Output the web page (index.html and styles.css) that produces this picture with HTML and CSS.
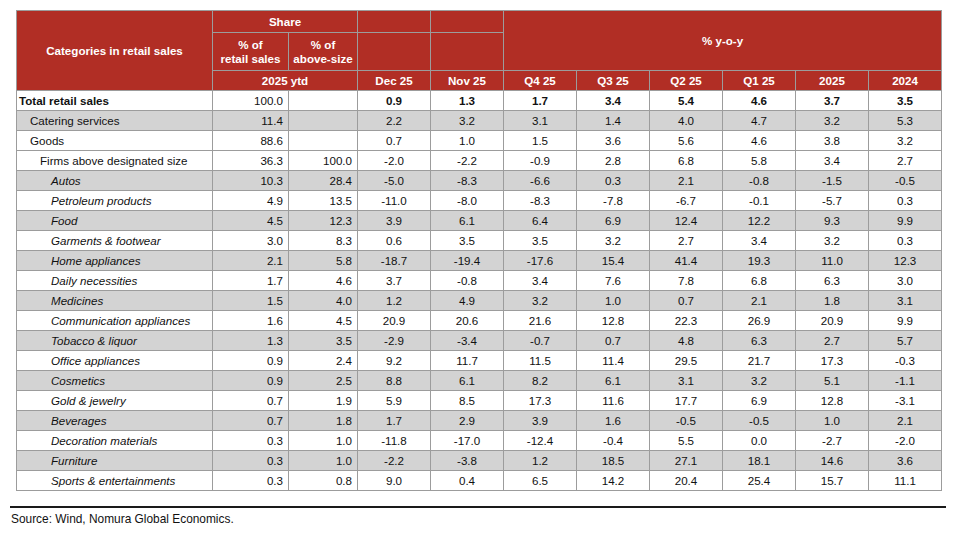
FILE: index.html
```html
<!DOCTYPE html>
<html>
<head>
<meta charset="utf-8">
<link rel="stylesheet" href="styles.css">
</head>
<body>
<div class="page">
<table class="tbl">
<colgroup>
<col class="c-cat"><col class="c-s1"><col class="c-s2">
<col class="c-n"><col class="c-n"><col class="c-n"><col class="c-n"><col class="c-n"><col class="c-n"><col class="c-n"><col class="c-n">
</colgroup>
<thead>
<tr class="h1">
<th rowspan="3">Categories in retail sales</th>
<th colspan="2">Share</th>
<th></th><th></th>
<th colspan="6" rowspan="2">% y-o-y</th>
</tr>
<tr class="h2">
<th>% of<br>retail sales</th>
<th>% of<br>above-size</th>
<th></th><th></th>
</tr>
<tr class="h3">
<th colspan="2">2025 ytd</th>
<th>Dec 25</th><th>Nov 25</th><th>Q4 25</th><th>Q3 25</th><th>Q2 25</th><th>Q1 25</th><th>2025</th><th>2024</th>
</tr>
</thead>
<tbody>
<tr class="w total"><td class="l0">Total retail sales</td><td class="r plain">100.0</td><td class="r"></td><td>0.9</td><td>1.3</td><td>1.7</td><td>3.4</td><td>5.4</td><td>4.6</td><td>3.7</td><td>3.5</td></tr>
<tr class="g"><td class="l1">Catering services</td><td class="r">11.4</td><td class="r"></td><td>2.2</td><td>3.2</td><td>3.1</td><td>1.4</td><td>4.0</td><td>4.7</td><td>3.2</td><td>5.3</td></tr>
<tr class="w"><td class="l1">Goods</td><td class="r">88.6</td><td class="r"></td><td>0.7</td><td>1.0</td><td>1.5</td><td>3.6</td><td>5.6</td><td>4.6</td><td>3.8</td><td>3.2</td></tr>
<tr class="w"><td class="l2">Firms above designated size</td><td class="r">36.3</td><td class="r">100.0</td><td>-2.0</td><td>-2.2</td><td>-0.9</td><td>2.8</td><td>6.8</td><td>5.8</td><td>3.4</td><td>2.7</td></tr>
<tr class="g"><td class="l3">Autos</td><td class="r">10.3</td><td class="r">28.4</td><td>-5.0</td><td>-8.3</td><td>-6.6</td><td>0.3</td><td>2.1</td><td>-0.8</td><td>-1.5</td><td>-0.5</td></tr>
<tr class="w"><td class="l3">Petroleum products</td><td class="r">4.9</td><td class="r">13.5</td><td>-11.0</td><td>-8.0</td><td>-8.3</td><td>-7.8</td><td>-6.7</td><td>-0.1</td><td>-5.7</td><td>0.3</td></tr>
<tr class="g"><td class="l3">Food</td><td class="r">4.5</td><td class="r">12.3</td><td>3.9</td><td>6.1</td><td>6.4</td><td>6.9</td><td>12.4</td><td>12.2</td><td>9.3</td><td>9.9</td></tr>
<tr class="w"><td class="l3">Garments &amp; footwear</td><td class="r">3.0</td><td class="r">8.3</td><td>0.6</td><td>3.5</td><td>3.5</td><td>3.2</td><td>2.7</td><td>3.4</td><td>3.2</td><td>0.3</td></tr>
<tr class="g"><td class="l3">Home appliances</td><td class="r">2.1</td><td class="r">5.8</td><td>-18.7</td><td>-19.4</td><td>-17.6</td><td>15.4</td><td>41.4</td><td>19.3</td><td>11.0</td><td>12.3</td></tr>
<tr class="w"><td class="l3">Daily necessities</td><td class="r">1.7</td><td class="r">4.6</td><td>3.7</td><td>-0.8</td><td>3.4</td><td>7.6</td><td>7.8</td><td>6.8</td><td>6.3</td><td>3.0</td></tr>
<tr class="g"><td class="l3">Medicines</td><td class="r">1.5</td><td class="r">4.0</td><td>1.2</td><td>4.9</td><td>3.2</td><td>1.0</td><td>0.7</td><td>2.1</td><td>1.8</td><td>3.1</td></tr>
<tr class="w"><td class="l3">Communication appliances</td><td class="r">1.6</td><td class="r">4.5</td><td>20.9</td><td>20.6</td><td>21.6</td><td>12.8</td><td>22.3</td><td>26.9</td><td>20.9</td><td>9.9</td></tr>
<tr class="g"><td class="l3">Tobacco &amp; liquor</td><td class="r">1.3</td><td class="r">3.5</td><td>-2.9</td><td>-3.4</td><td>-0.7</td><td>0.7</td><td>4.8</td><td>6.3</td><td>2.7</td><td>5.7</td></tr>
<tr class="w"><td class="l3">Office appliances</td><td class="r">0.9</td><td class="r">2.4</td><td>9.2</td><td>11.7</td><td>11.5</td><td>11.4</td><td>29.5</td><td>21.7</td><td>17.3</td><td>-0.3</td></tr>
<tr class="g"><td class="l3">Cosmetics</td><td class="r">0.9</td><td class="r">2.5</td><td>8.8</td><td>6.1</td><td>8.2</td><td>6.1</td><td>3.1</td><td>3.2</td><td>5.1</td><td>-1.1</td></tr>
<tr class="w"><td class="l3">Gold &amp; jewelry</td><td class="r">0.7</td><td class="r">1.9</td><td>5.9</td><td>8.5</td><td>17.3</td><td>11.6</td><td>17.7</td><td>6.9</td><td>12.8</td><td>-3.1</td></tr>
<tr class="g"><td class="l3">Beverages</td><td class="r">0.7</td><td class="r">1.8</td><td>1.7</td><td>2.9</td><td>3.9</td><td>1.6</td><td>-0.5</td><td>-0.5</td><td>1.0</td><td>2.1</td></tr>
<tr class="w"><td class="l3">Decoration materials</td><td class="r">0.3</td><td class="r">1.0</td><td>-11.8</td><td>-17.0</td><td>-12.4</td><td>-0.4</td><td>5.5</td><td>0.0</td><td>-2.7</td><td>-2.0</td></tr>
<tr class="g"><td class="l3">Furniture</td><td class="r">0.3</td><td class="r">1.0</td><td>-2.2</td><td>-3.8</td><td>1.2</td><td>18.5</td><td>27.1</td><td>18.1</td><td>14.6</td><td>3.6</td></tr>
<tr class="w"><td class="l3">Sports &amp; entertainments</td><td class="r">0.3</td><td class="r">0.8</td><td>9.0</td><td>0.4</td><td>6.5</td><td>14.2</td><td>20.4</td><td>25.4</td><td>15.7</td><td>11.1</td></tr>
</tbody>
</table>
<div class="rule"></div>
<p class="source">Source: Wind, Nomura Global Economics.</p>
</div>
</body>
</html>
```
FILE: styles.css
```css
html, body {
  margin: 0;
  padding: 0;
  background: #ffffff;
}
body {
  font-family: "Liberation Sans", Arial, sans-serif;
  color: #111111;
}
.page {
  padding: 10px 16px 0 10px;
}
.tbl {
  margin-left: 6px;
  border-collapse: collapse;
  table-layout: fixed;
  width: 926px;
  font-size: 11.6px;
}
.c-cat { width: 196px; }
.c-s1 { width: 76px; }
.c-s2 { width: 69px; }
.c-n { width: 73px; }
.tbl th,
.tbl td {
  border: 1px solid #9c9c9c;
  padding: 0 5px;
  line-height: 14px;
  white-space: nowrap;
  overflow: hidden;
}
.tbl th {
  background: #b12e25;
  color: #ffffff;
  font-weight: bold;
  text-align: center;
  padding: 0 2px;
}
.h1 th { height: 21px; }
.h2 th { height: 37px; }
.h3 th { height: 19px; }
.tbl td {
  height: 19px;
  text-align: center;
}
.tbl td.r { text-align: right; }
.w td { background: #ffffff; }
.g td { background: #d3d3d3; }
.total td { font-weight: bold; }
.total td.plain { font-weight: normal; }
.tbl td.l0 { text-align: left; padding-left: 2px; }
.tbl td.l1 { text-align: left; padding-left: 13px; }
.tbl td.l2 { text-align: left; padding-left: 23px; }
.tbl td.l3 { text-align: left; padding-left: 34px; font-style: italic; }
.rule {
  margin-top: 15px;
  width: 936px;
  height: 2px;
  background: #1a1a1a;
}
.source {
  margin: 4px 0 0 1px;
  font-size: 11.9px;
  color: #111111;
}
```
